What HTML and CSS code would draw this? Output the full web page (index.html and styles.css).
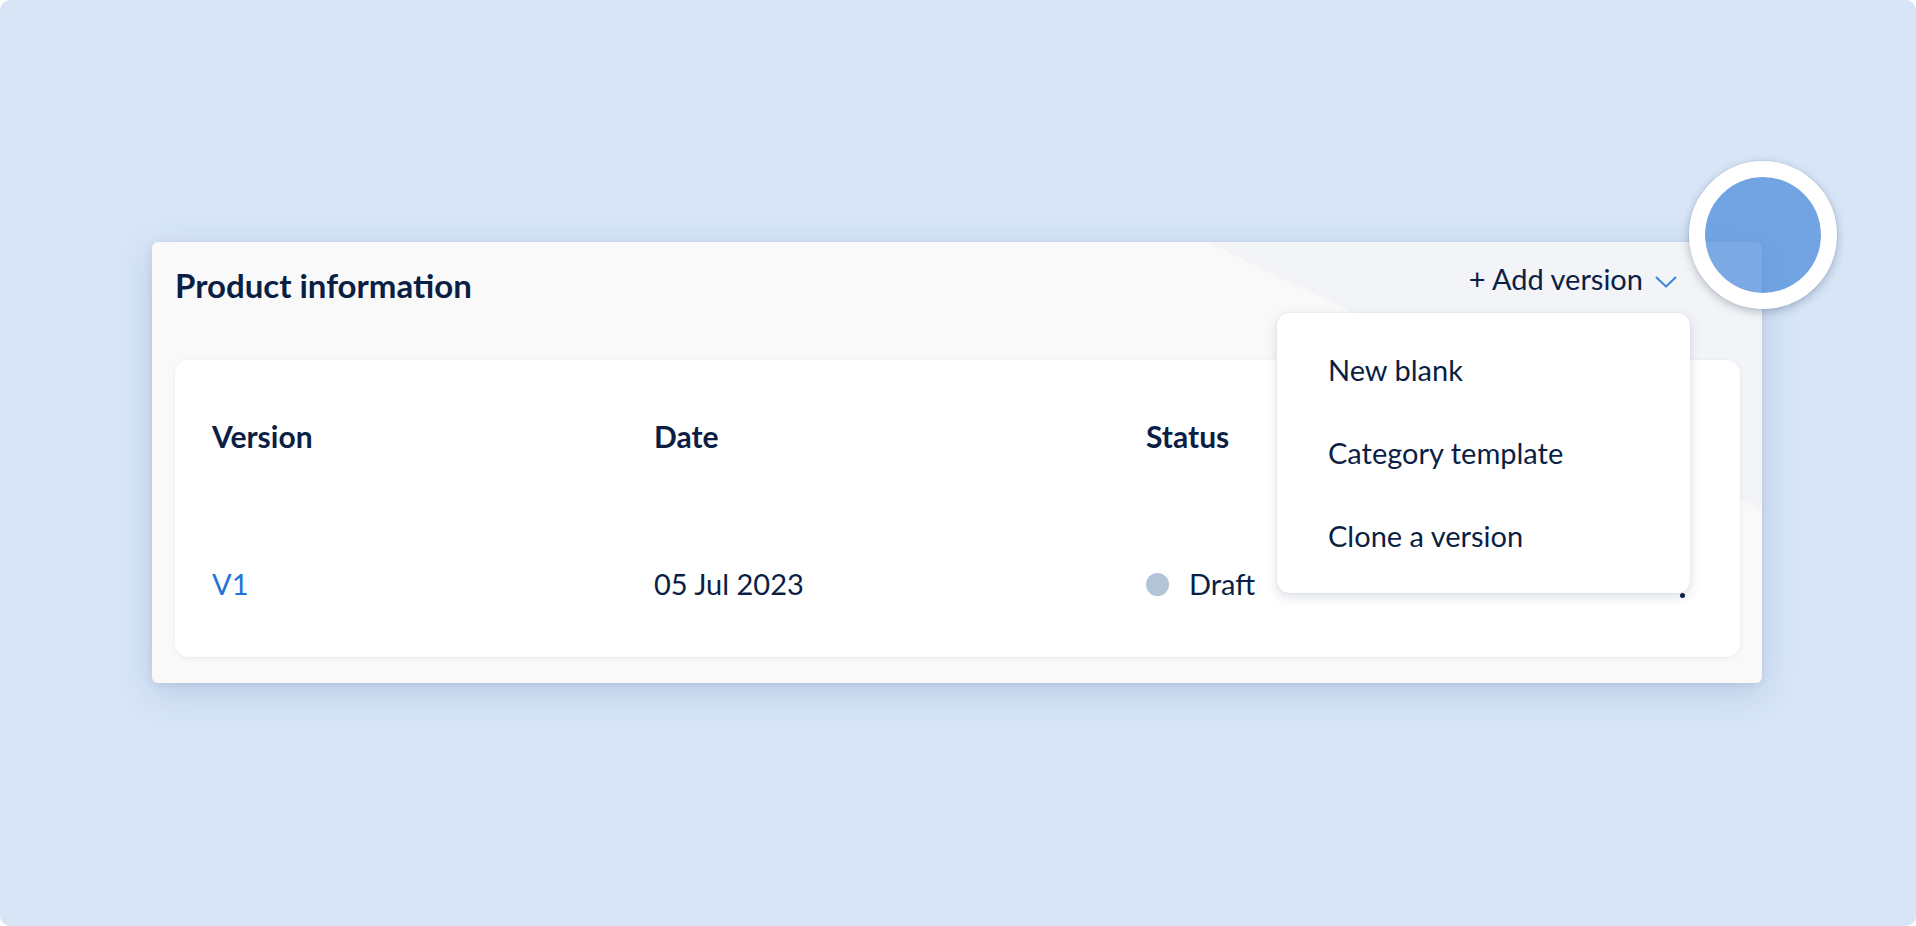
FILE: index.html
```html
<!DOCTYPE html>
<html lang="en">
<head>
<meta charset="utf-8">
<title>Product information</title>
<link rel="stylesheet" href="styles.css">
</head>
<body>
<div class="frame">
  <section class="card">
    <header class="card-head">
      <h1 class="card-title">Product information</h1>
      <button class="add-btn" type="button">
        <span>+ Add version</span>
        <svg class="chev" width="22" height="12" viewBox="0 0 22 12" aria-hidden="true"><path d="M1.5 1.5 L11 10.5 L20.5 1.5" fill="none" stroke="#3c86de" stroke-width="2" stroke-linecap="round" stroke-linejoin="round"/></svg>
      </button>
    </header>

    <div class="panel">
      <div class="table">
        <div class="th">Version</div>
        <div class="th">Date</div>
        <div class="th">Status</div>
        <div class="th"></div>

        <div class="td"><a class="ver-link" href="#">V1</a></div>
        <div class="td">05 Jul 2023</div>
        <div class="td status"><span class="dot"></span>Draft</div>
        <div class="td kebab-cell"><span class="kebab"><i></i><i></i><i></i></span></div>
      </div>
    </div>

    <ul class="menu">
      <li>New blank</li>
      <li>Category template</li>
      <li>Clone a version</li>
    </ul>

    <div class="cursor-ring"></div>
  </section>
</div>
</body>
</html>
```
FILE: styles.css
```css
* { box-sizing: border-box; }
html, body { margin: 0; padding: 0; background: #ffffff; }
body {
  font-family: Lato, "Open Sans", "Liberation Sans", sans-serif;
  color: #0b1f45;
}
.frame {
  width: 1916px;
  height: 926px;
  background: #d7e5f7;
  border-radius: 10px;
  padding: 242px 0 0 152px;
  overflow: hidden;
}
.card {
  position: relative;
  width: 1610px;
  height: 441px;
  background: #f9f9f9;
  border-radius: 6px;
  padding: 0 22px 26px 23px;
  box-shadow: 0 10px 36px rgba(70, 100, 145, 0.20), 0 2px 6px rgba(70, 100, 145, 0.12);
}
.card::before {
  content: "";
  position: absolute;
  inset: 0;
  border-radius: 6px;
  background: #f2f4f7;
  clip-path: polygon(1055px 0, 100% 0, 100% 268px);
  pointer-events: none;
}
.card-head {
  position: relative;
  height: 118px;
  display: flex;
  align-items: flex-start;
  justify-content: space-between;
  padding: 23px 63px 0 0;
}
.card-title {
  margin: 0;
  font-size: 33px;
  line-height: 40px;
  font-weight: 700;
  color: #0b1f45;
}
.add-btn {
  display: flex;
  align-items: center;
  gap: 12px;
  margin-top: -3px;
  border: 0;
  background: none;
  padding: 0;
  font: inherit;
  font-size: 29px;
  line-height: 34px;
  color: #0b1f45;
}
.chev { margin-top: 6px; }

.panel {
  position: relative;
  height: 297px;
  background: #ffffff;
  border-radius: 14px;
  box-shadow: 0 1px 4px rgba(40, 60, 90, 0.08);
  padding: 59px 37px 0 37px;
}
.table {
  display: grid;
  grid-template-columns: 442px 492px 1fr 42px;
  grid-template-rows: 34px 34px;
  row-gap: 114px;
  align-items: center;
}
.th {
  font-size: 30px;
  line-height: 34px;
  font-weight: 700;
}
.td {
  font-size: 29px;
  line-height: 34px;
}
.ver-link { color: #1f74d9; text-decoration: none; }
.status { display: flex; align-items: center; gap: 20px; }
.dot {
  width: 23px;
  height: 23px;
  border-radius: 50%;
  background: #b3c4d9;
  display: inline-block;
}
.kebab-cell { display: flex; justify-content: center; }
.kebab {
  display: flex;
  flex-direction: column;
  gap: 4px;
  margin-top: 5px;
}
.kebab i {
  display: block;
  width: 5px;
  height: 5px;
  border-radius: 50%;
  background: #0b1f45;
}

.menu {
  position: absolute;
  top: 71px;
  right: 72px;
  width: 413px;
  height: 280px;
  margin: 0;
  padding: 15px 0 0 51px;
  list-style: none;
  background: #ffffff;
  border-radius: 12px;
  box-shadow: 0 4px 12px rgba(30, 50, 80, 0.16), 0 0 1px rgba(30, 50, 80, 0.2);
}
.menu li {
  font-size: 29px;
  line-height: 83px;
  color: #0b1f45;
}
.cursor-ring {
  position: absolute;
  left: 1537px;
  top: -81px;
  width: 148px;
  height: 148px;
  border-radius: 50%;
  border: 16px solid #ffffff;
  background: rgba(68, 135, 218, 0.69);
  background-clip: padding-box;
  box-shadow: 0 3px 10px rgba(20, 40, 70, 0.28), 0 0 1px rgba(20, 40, 70, 0.4);
}
```
